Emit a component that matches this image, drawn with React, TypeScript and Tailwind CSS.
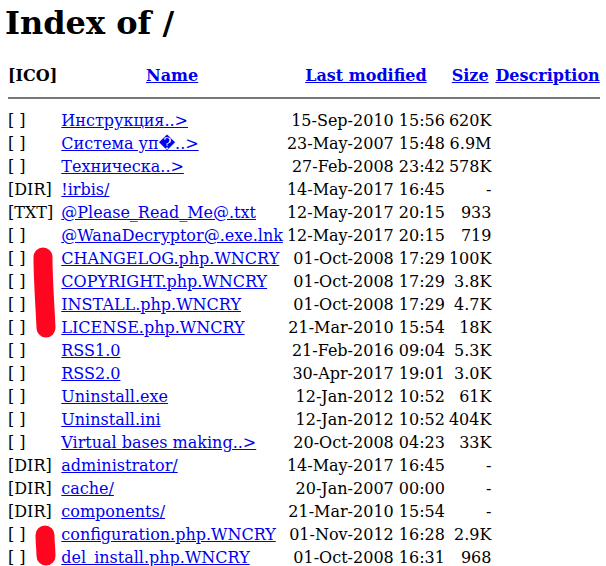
type Entry = {
  icon: string;
  name: string;
  modified: string;
  size: string;
};

const entries: Entry[] = [
  { icon: "[ ]", name: "Инструкция..>", modified: "15-Sep-2010 15:56", size: "620K" },
  { icon: "[ ]", name: "Система уп\uFFFD..>", modified: "23-May-2007 15:48", size: "6.9M" },
  { icon: "[ ]", name: "Техническа..>", modified: "27-Feb-2008 23:42", size: "578K" },
  { icon: "[DIR]", name: "!irbis/", modified: "14-May-2017 16:45", size: "-" },
  { icon: "[TXT]", name: "@Please_Read_Me@.txt", modified: "12-May-2017 20:15", size: "933" },
  { icon: "[ ]", name: "@WanaDecryptor@.exe.lnk", modified: "12-May-2017 20:15", size: "719" },
  { icon: "[ ]", name: "CHANGELOG.php.WNCRY", modified: "01-Oct-2008 17:29", size: "100K" },
  { icon: "[ ]", name: "COPYRIGHT.php.WNCRY", modified: "01-Oct-2008 17:29", size: "3.8K" },
  { icon: "[ ]", name: "INSTALL.php.WNCRY", modified: "01-Oct-2008 17:29", size: "4.7K" },
  { icon: "[ ]", name: "LICENSE.php.WNCRY", modified: "21-Mar-2010 15:54", size: "18K" },
  { icon: "[ ]", name: "RSS1.0", modified: "21-Feb-2016 09:04", size: "5.3K" },
  { icon: "[ ]", name: "RSS2.0", modified: "30-Apr-2017 19:01", size: "3.0K" },
  { icon: "[ ]", name: "Uninstall.exe", modified: "12-Jan-2012 10:52", size: "61K" },
  { icon: "[ ]", name: "Uninstall.ini", modified: "12-Jan-2012 10:52", size: "404K" },
  { icon: "[ ]", name: "Virtual bases making..>", modified: "20-Oct-2008 04:23", size: "33K" },
  { icon: "[DIR]", name: "administrator/", modified: "14-May-2017 16:45", size: "-" },
  { icon: "[DIR]", name: "cache/", modified: "20-Jan-2007 00:00", size: "-" },
  { icon: "[DIR]", name: "components/", modified: "21-Mar-2010 15:54", size: "-" },
  { icon: "[ ]", name: "configuration.php.WNCRY", modified: "01-Nov-2012 16:28", size: "2.9K" },
  { icon: "[ ]", name: "del_install.php.WNCRY", modified: "01-Oct-2008 16:31", size: "968" },
];

const headers = ["Name", "Last modified", "Size", "Description"];

// plain Apache-style cell: 1px padding, serif, normal line height
const cell = "p-px font-['DejaVu_Serif','Liberation_Serif',serif] text-[16px] leading-[19px]";

export default function App() {
  return (
    <div className="relative min-h-screen bg-white pl-[5px] pt-[4px] text-[16px] leading-[19px] text-black font-['DejaVu_Serif','Liberation_Serif',serif]">
      <h1 className="m-0 mb-[21px] text-[32px] font-bold leading-[38px]">Index of /</h1>

      <table className="border-separate border-spacing-[2px] font-['DejaVu_Serif','Liberation_Serif',serif]">
        <tbody>
          <tr>
            <th className={`${cell} text-center align-top font-bold`}>[ICO]</th>
            {headers.map((h) => (
              <th key={h} className={`${cell} text-center font-bold`}>
                <a href="#" className="text-[#0000ee] underline">
                  {h}
                </a>
              </th>
            ))}
          </tr>
          <tr>
            <th colSpan={5} className="p-px">
              <hr className="my-2 h-0 border-t-2 border-[#777]" />
            </th>
          </tr>
          {entries.map((e) => (
            <tr key={e.name}>
              <td className={`${cell} align-top whitespace-pre`}>{e.icon}</td>
              <td className={`${cell} whitespace-nowrap`}>
                <a href="#" className="text-[#0000ee] underline">
                  {e.name}
                </a>
              </td>
              <td className={`${cell} text-right whitespace-nowrap`}>{e.modified}</td>
              <td className={`${cell} text-right`}>{e.size}</td>
              <td className={cell}>&nbsp;</td>
            </tr>
          ))}
        </tbody>
      </table>

      {/* marker scribbles over the .WNCRY rows */}
      <svg
        className="pointer-events-none absolute left-0 top-0"
        width="606"
        height="566"
        viewBox="0 0 606 566"
      >
        <path
          d="M43 257 C43 280 45 305 46 328"
          stroke="#ff0620"
          strokeWidth="19"
          strokeLinecap="round"
          fill="none"
        />
        <path
          d="M45 535 C45 542 46 550 46 556"
          stroke="#ff0620"
          strokeWidth="19"
          strokeLinecap="round"
          fill="none"
        />
      </svg>
    </div>
  );
}
